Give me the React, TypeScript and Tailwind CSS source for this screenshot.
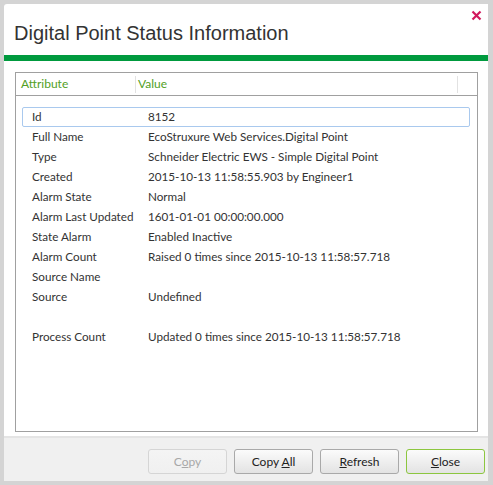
import React from "react";

const rows: [string, string][] = [
  ["Id", "8152"],
  ["Full Name", "EcoStruxure Web Services.Digital Point"],
  ["Type", "Schneider Electric EWS - Simple Digital Point"],
  ["Created", "2015-10-13 11:58:55.903 by Engineer1"],
  ["Alarm State", "Normal"],
  ["Alarm Last Updated", "1601-01-01 00:00:00.000"],
  ["State Alarm", "Enabled Inactive"],
  ["Alarm Count", "Raised 0 times since 2015-10-13 11:58:57.718"],
  ["Source Name", ""],
  ["Source", "Undefined"],
  ["", ""],
  ["Process Count", "Updated 0 times since 2015-10-13 11:58:57.718"],
];

function Btn({ children, disabled, primary }: { children: React.ReactNode; disabled?: boolean; primary?: boolean }) {
  return (
    <div
      className={
        "w-[79px] h-[25px] rounded-[3px] border flex items-center justify-center text-[12px] bg-gradient-to-b " +
        (disabled
          ? "border-[#d5d5d5] text-[#a8a8a8] from-[#f4f4f4] to-[#f0f0f0]"
          : primary
          ? "border-[#8cc63f] text-[#222] from-[#fbfbfb] to-[#e3e3e3]"
          : "border-[#a9a9a9] text-[#222] from-[#fbfbfb] to-[#e3e3e3]")
      }
    >
      <span className="whitespace-pre">{children}</span>
    </div>
  );
}

export default function App() {
  return (
    <div
      className="w-[493px] h-[485px] bg-[#d4d4d4] pt-[4px] pl-[4px] pr-[5px] pb-[4px]"
      style={{ fontFamily: "Lato, 'Open Sans', sans-serif" }}
    >
      <div className="w-full h-full bg-white rounded-tl-[3px] flex flex-col relative">
        <div className="h-[51px] flex items-end pl-[10px] pb-[12px]">
          <span
            className="text-[20px] leading-none text-[#333]"
            style={{ fontFamily: "'Liberation Sans', Arial, sans-serif" }}
          >
            Digital Point Status Information
          </span>
        </div>
        <svg className="absolute right-[6px] top-[6px]" width="11" height="11" viewBox="0 0 11 11">
          <path d="M1.5 1.5 L9.5 9.5 M9.5 1.5 L1.5 9.5" stroke="#d1185c" strokeWidth="2.2" />
        </svg>
        <div className="h-[6px] bg-[#009a3e]" />
        <div className="flex-1 pt-[11px] pl-[11px] pr-[10px] pb-[4px] flex flex-col">
          <div className="flex-1 border border-[#a0a0a0] flex flex-col">
            <div className="h-[23px] border-b border-[#a0a0a0] flex items-center text-[12px] text-[#52a01e] relative">
              <span className="pl-[5px] w-[119px]">Attribute</span>
              <div className="w-px h-[17px] bg-[#e2e2e2]" />
              <span className="pl-[2px]">Value</span>
              <div className="absolute left-[441px] top-[3px] w-px h-[17px] bg-[#e2e2e2]" />
            </div>
            <div className="pt-[11px] pl-[6px] pr-[7px] flex flex-col text-[11.7px] text-[#333]">
              {rows.map(([a, v], i) => (
                <div
                  key={i}
                  className={
                    "h-[20px] flex items-center pl-[9px] " +
                    (i === 0 ? "border border-[#a9c9ee] rounded-[2px]" : "border border-transparent")
                  }
                >
                  <span className="w-[116px] whitespace-nowrap">{a}</span>
                  <span className="whitespace-nowrap">{v}</span>
                </div>
              ))}
            </div>
          </div>
        </div>
        <div className="h-[45px] bg-[#f0f0f0] border-t-[2px] border-[#e4e4e4] flex items-start justify-end gap-[7px] pt-[11px] pr-[3px]">
          <Btn disabled>
            C<span className="underline">o</span>py
          </Btn>
          <Btn>
            Copy <span className="underline">A</span>ll
          </Btn>
          <Btn>
            <span className="underline">R</span>efresh
          </Btn>
          <Btn primary>
            <span className="underline">C</span>lose
          </Btn>
        </div>
      </div>
    </div>
  );
}
